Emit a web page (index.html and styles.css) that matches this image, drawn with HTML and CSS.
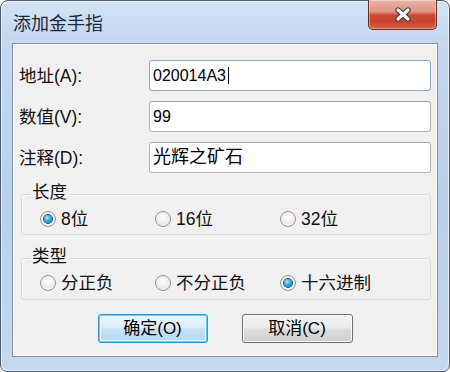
FILE: index.html
```html
<!DOCTYPE html>
<html lang="zh-CN">
<head>
<meta charset="utf-8">
<title>添加金手指</title>
<link rel="stylesheet" href="styles.css">
</head>
<body>
<div class="window">
  <div class="titlebar">
    <span class="title">添加金手指</span>
    <button class="close" aria-label="关闭">
      <svg width="18" height="15" viewBox="0 0 18 15">
        <path d="M4 3 L14 12 M14 3 L4 12" stroke="#3a3a3a" stroke-width="5.4" stroke-linecap="round" fill="none"/>
        <path d="M4 3 L14 12 M14 3 L4 12" stroke="#ffffff" stroke-width="3.2" stroke-linecap="round" fill="none"/>
      </svg>
    </button>
  </div>
  <div class="client">
    <div class="fields">
      <span class="field-label">地址(A):</span>
      <div class="input focused"><span>020014A3</span><span class="caret"></span></div>
      <span class="field-label">数值(V):</span>
      <div class="input"><span>99</span></div>
      <span class="field-label">注释(D):</span>
      <div class="input"><span class="note">光辉之矿石</span></div>
    </div>
    <fieldset class="group">
      <legend>长度</legend>
      <div class="options">
        <span class="option"><span class="radio checked"></span>8位</span>
        <span class="option"><span class="radio"></span>16位</span>
        <span class="option"><span class="radio"></span>32位</span>
      </div>
    </fieldset>
    <fieldset class="group second">
      <legend>类型</legend>
      <div class="options">
        <span class="option"><span class="radio"></span>分正负</span>
        <span class="option"><span class="radio"></span>不分正负</span>
        <span class="option"><span class="radio checked"></span>十六进制</span>
      </div>
    </fieldset>
    <div class="buttons">
      <button class="btn default">确定(O)</button>
      <button class="btn cancel">取消(C)</button>
    </div>
  </div>
</div>
</body>
</html>
```
FILE: styles.css
```css
html, body {
  margin: 0;
  padding: 0;
}
body {
  width: 450px;
  height: 372px;
  overflow: hidden;
  background: #ffffff;
  font-family: "Liberation Sans", "Noto Sans CJK SC", sans-serif;
  color: #111;
}
.window {
  box-sizing: border-box;
  width: 450px;
  height: 372px;
  border: 1px solid #4d5a6a;
  border-radius: 8px 8px 7px 7px;
  background: linear-gradient(180deg, #d3e3f4 0%, #c3d8ef 10%, #b9d0ea 55%, #c3d8ee 100%);
  box-shadow: inset 0 0 0 1px rgba(255, 255, 255, 0.6);
  padding: 0 11px 14px 11px;
  display: flex;
  flex-direction: column;
}
.titlebar {
  height: 42px;
  flex: none;
  display: flex;
  justify-content: space-between;
  align-items: flex-start;
}
.title {
  font-family: "Noto Sans CJK SC", sans-serif;
  font-size: 18px;
  line-height: 20px;
  margin: 11px 0 0 1px;
  color: #1c2836;
}
.close {
  width: 69px;
  height: 30px;
  margin: -1px 1px 0 0;
  padding: 0;
  border: 1px solid #6a2e25;
  border-top: none;
  border-radius: 0 0 5px 5px;
  background: linear-gradient(180deg, #e9b4a9 0%, #df9383 40%, #cc4a33 52%, #c8422b 75%, #d7664c 100%);
  box-shadow: inset 0 0 0 1px rgba(255, 255, 255, 0.35);
  display: flex;
  align-items: center;
  justify-content: center;
}
.client {
  flex: 1;
  box-sizing: border-box;
  border: 1px solid #8392a5;
  box-shadow: inset 0 0 0 1px #fafafa;
  background: #f0f0f0;
  padding: 16px 6px 0 6px;
  display: flex;
  flex-direction: column;
}
.fields {
  display: grid;
  grid-template-columns: 130px 1fr;
  grid-auto-rows: 31px;
  row-gap: 10px;
  align-items: center;
}
.field-label {
  font-size: 17.5px;
  line-height: 20px;
  color: #111;
}
.input {
  box-sizing: border-box;
  height: 31px;
  border: 1px solid #b3b5bb;
  border-top-color: #a3a6ad;
  border-radius: 3px;
  background: #ffffff;
  padding: 0 3px;
  display: flex;
  align-items: center;
  font-size: 16px;
  color: #000;
}
.input.focused {
  border-color: #86a6cc;
}
.caret {
  width: 1px;
  height: 17px;
  background: #000;
  margin-left: 2px;
}
.note {
  align-self: flex-start;
  margin-top: 2px;
  font-family: "Noto Sans CJK SC", sans-serif;
  font-size: 18px;
  line-height: 20px;
}
.group {
  margin: 8px 0 0 2px;
  padding: 0 0 3px 0;
  min-width: 0;
  border: 1px solid #d3dbe1;
  border-radius: 3px;
  box-shadow: inset 1px 1px 0 #fbfbfb;
}
.group.second {
  margin-top: 10px;
  padding-bottom: 4px;
}
.group legend {
  margin-left: 8px;
  padding: 0 2px 6px 2px;
  font-family: "Noto Sans CJK SC", sans-serif;
  font-size: 17.5px;
  line-height: 20px;
  color: #111;
}
.options {
  display: grid;
  grid-template-columns: 115px 125px 1fr;
  height: 24px;
  align-items: center;
  padding-left: 18px;
}
.option {
  display: flex;
  align-items: center;
  gap: 5px;
  font-size: 17.5px;
  line-height: 20px;
}
.radio {
  box-sizing: border-box;
  width: 16px;
  height: 16px;
  border-radius: 50%;
  border: 1px solid #929292;
  background: radial-gradient(circle at 50% 40%, #ffffff 0%, #ececec 55%, #cfcfcf 100%);
  box-shadow: inset 0 0 0 1px #f4f4f4;
  display: flex;
  align-items: center;
  justify-content: center;
}
.radio.checked::after {
  content: "";
  width: 8px;
  height: 8px;
  border-radius: 50%;
  background: radial-gradient(circle at 40% 35%, #b8ecff 0%, #35aee6 40%, #0f5f95 100%);
  box-shadow: 0 0 0 1px #1d4d74;
}
.buttons {
  display: flex;
  justify-content: center;
  gap: 34px;
  margin-top: 14px;
}
.btn {
  box-sizing: border-box;
  width: 110px;
  height: 29px;
  padding: 0;
  border: 1px solid #707070;
  border-radius: 3px;
  background: linear-gradient(180deg, #f3f3f3 0%, #ebebeb 48%, #dddddd 52%, #cfcfcf 100%);
  box-shadow: inset 0 0 0 1px #fbfbfb;
  font-family: "Liberation Sans", "Noto Sans CJK SC", sans-serif;
  font-size: 17px;
  line-height: 20px;
  color: #000;
}
.btn.cancel {
  width: 111px;
}
.btn.default {
  border-color: #3d8fc4;
  background: linear-gradient(180deg, #eef6fb 0%, #dcecf6 48%, #c6e1f2 52%, #b7d8ee 100%);
  box-shadow: inset 0 0 0 1px #5fd0f5, inset 0 0 0 2px #e6f6fd;
}
```
